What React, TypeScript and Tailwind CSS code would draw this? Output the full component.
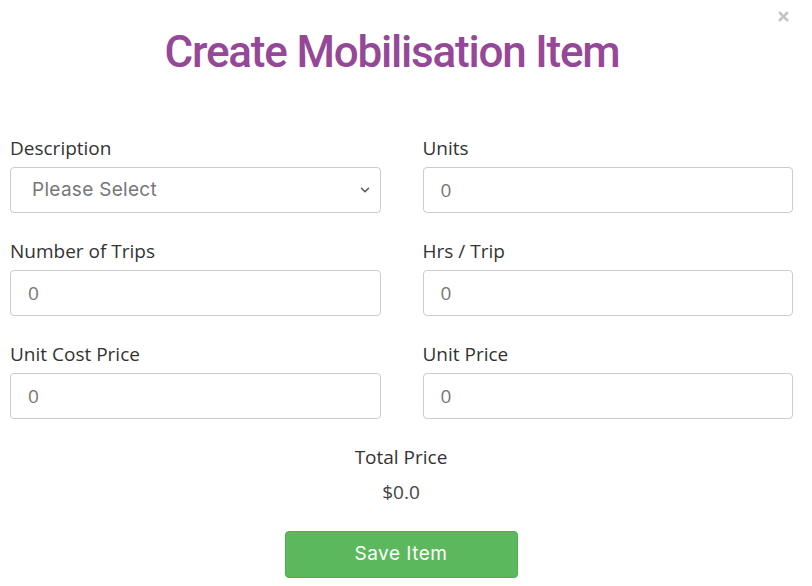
import React from 'react';
import { ChevronDown, X } from 'lucide-react';

const fields = [
  { label: 'Description', select: true },
  { label: 'Units' },
  { label: 'Number of Trips' },
  { label: 'Hrs / Trip' },
  { label: 'Unit Cost Price' },
  { label: 'Unit Price' },
];

export default function App() {
  return (
    <div className="relative w-[812px] h-[586px] bg-white overflow-hidden font-['Open_Sans',sans-serif] text-[#333]">
      <button className="absolute right-[21px] top-[9px] text-[#c4c4c4]">
        <X className="w-[15px] h-[15px]" strokeWidth={4} />
      </button>

      <h1 className="pt-[24px] text-center pr-[28px] text-[44px] leading-[56px] font-medium tracking-[-1.2px] text-[#954798] font-['Roboto',sans-serif]">
        Create Mobilisation Item
      </h1>

      <div className="mt-[56px] pl-[10px] pr-[19px] grid grid-cols-2 gap-x-[42px]">
        {fields.map((f) => (
          <div key={f.label} className="mb-[26px]">
            <label className="block text-[19px] leading-[24px] mb-[7px]">{f.label}</label>
            {f.select ? (
              <div className="h-[46px] border border-[#ccc] rounded-[4px] flex items-center justify-between pl-[21px] pr-[8px] text-[19px] tracking-[0.3px] text-[#777] font-['Inter',sans-serif]">
                <span>Please Select</span>
                <ChevronDown className="w-[14px] h-[14px] text-[#555]" strokeWidth={2.5} />
              </div>
            ) : (
              <div className="h-[46px] border border-[#ccc] rounded-[4px] flex items-center pl-[17px] text-[19px] text-[#777]">
                0
              </div>
            )}
          </div>
        ))}
      </div>

      <div className="pr-[10px] text-center text-[19px] leading-[24px]">Total Price</div>
      <div className="mt-[11px] pr-[10px] text-center text-[19px] leading-[24px] text-[#444]">$0.0</div>
      <div className="mt-[27px] pr-[10px] flex justify-center">
        <button className="w-[233px] h-[47px] bg-[#5cb85c] border border-[#4cae4c] rounded-[4px] text-white text-[19px] tracking-[0.5px] font-['Inter',sans-serif]">
          Save Item
        </button>
      </div>
    </div>
  );
}
